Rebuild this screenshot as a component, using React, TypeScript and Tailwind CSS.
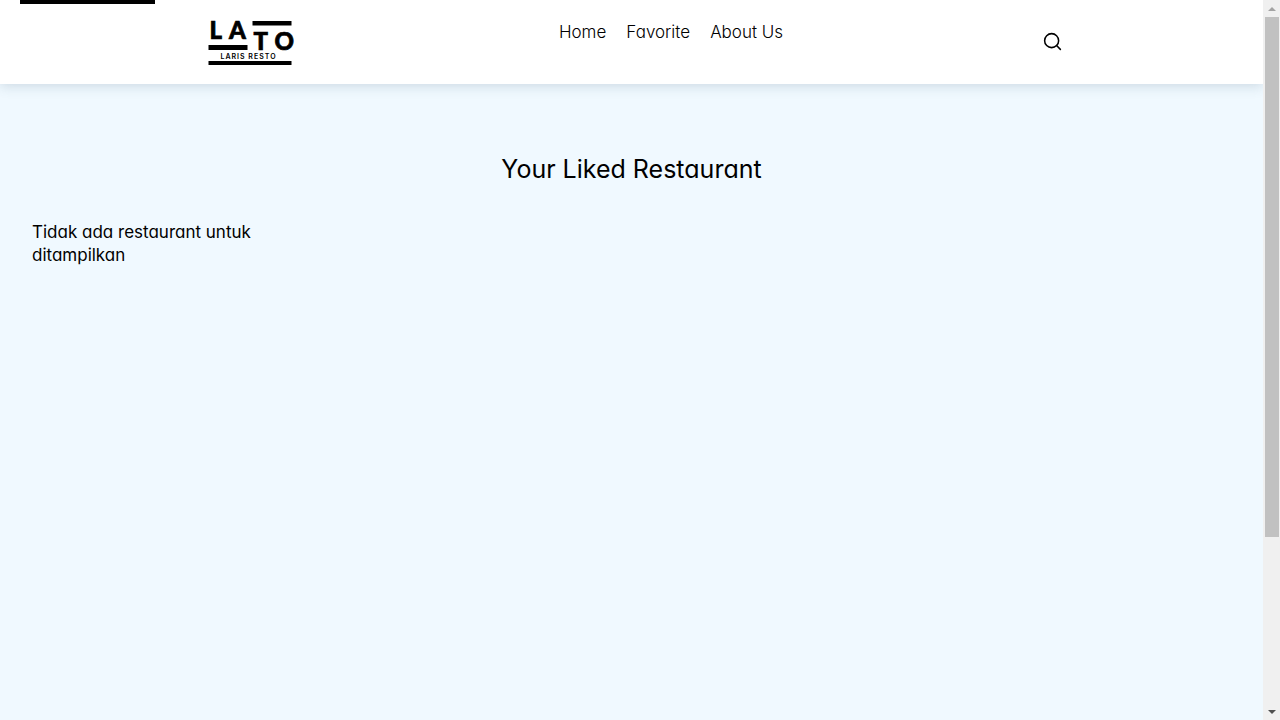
import { FiSearch } from "react-icons/fi";

const links = [
  { label: "Home", href: "#/home" },
  { label: "Favorite", href: "#/favorite" },
  { label: "About Us", href: "#/about" },
];

function Logo() {
  return (
    <svg
      width="100"
      height="52"
      viewBox="0 0 100 52"
      role="img"
      aria-label="Lato, Laris Resto"
      fill="#000"
    >
      <rect x="52.5" y="5" width="39" height="4.5" />
      <rect x="8.5" y="29" width="39" height="5" />
      <rect x="8.5" y="45" width="83" height="4" />
      <g fontSize="24" fontFamily="Lato, sans-serif" fontWeight="900" stroke="#000" strokeWidth="0.7">
        <text x="9.5" y="22.5">L</text>
        <text x="29" y="22.5">A</text>
        <text x="53.5" y="34">T</text>
        <text x="74.5" y="34">O</text>
      </g>
      <text x="20.5" y="42.5" fontSize="7" fontFamily="Inter, sans-serif" fontWeight="600" letterSpacing="1">
        LARIS RESTO
      </text>
    </svg>
  );
}

function Header() {
  return (
    <header className="relative h-21 bg-white shadow-[0_2px_12px_rgba(60,90,110,0.2)]">
      <div className="mx-auto flex max-w-[863px] items-start justify-between pt-4">
        <a href="#/home">
          <Logo />
        </a>
        <nav className="pt-1">
          <ul className="flex gap-5 text-[17px] leading-6 font-light text-black">
            {links.map((link) => (
              <li key={link.label}>
                <a href={link.href}>{link.label}</a>
              </li>
            ))}
          </ul>
        </nav>
        <button type="button" aria-label="Search" className="pt-[15px]">
          <FiSearch size={21} strokeWidth={1.75} />
        </button>
      </div>
    </header>
  );
}

function ScrollTrack() {
  return (
    <div aria-hidden="true" className="relative flex w-[17px] shrink-0 flex-col items-center bg-[#f0f0f0]">
      <div className="flex h-[17px] items-center">
        <svg width="8" height="4" viewBox="0 0 8 4" fill="#a3a3a3">
          <path d="M0 4 4 0l4 4z" />
        </svg>
      </div>
      <div className="flex w-[14px] grow flex-col">
        <div className="grow-[520] basis-0 bg-[#c1c1c1]" />
        <div className="grow-[166] basis-0" />
      </div>
      <div className="flex h-[17px] items-center">
        <svg width="8" height="4" viewBox="0 0 8 4" fill="#505050">
          <path d="M0 0h8L4 4z" />
        </svg>
      </div>
    </div>
  );
}

export default function App() {
  return (
    <div className="flex min-h-screen overflow-hidden bg-[#f0f9ff] font-[Inter,sans-serif] text-black [font-feature-settings:'cv11']">
      <a
        href="#content"
        aria-label="Skip to content"
        className="absolute -top-10 left-5 z-10 h-11 w-[135px] bg-black"
      />
      <div className="grow">
        <Header />
        <main id="content" className="px-8 pt-[67px]">
          <h1 className="text-center text-[25px] leading-9">Your Liked Restaurant</h1>
          <div className="mt-[34px] grid grid-cols-[repeat(auto-fill,minmax(240px,1fr))] gap-8">
            <p className="text-[17px] leading-[23px]">Tidak ada restaurant untuk ditampilkan</p>
          </div>
        </main>
      </div>
      <ScrollTrack />
    </div>
  );
}
